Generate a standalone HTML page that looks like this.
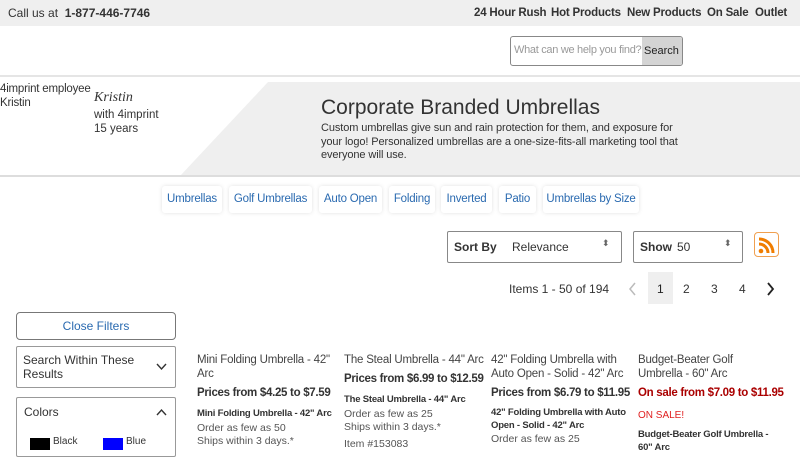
<!DOCTYPE html>
<html><head><meta charset="utf-8"><style>
*{margin:0;padding:0;box-sizing:border-box}
body{width:800px;height:450px;overflow:hidden;background:#fff;font-family:"Liberation Sans",sans-serif;color:#333;position:relative}
.a{position:absolute;white-space:nowrap}
.top{position:absolute;left:0;top:0;width:800px;height:26px;background:#efefef}
.nav{font-size:11.5px;font-weight:bold;color:#333;top:7px;letter-spacing:-.2px}
.chip{position:absolute;top:186px;height:27px;background:#fff;box-shadow:0 0 4px rgba(0,0,0,.12);border-radius:3px;color:#2a6ab0;font-size:11.5px;line-height:27px;text-align:center;white-space:nowrap;letter-spacing:-.2px}
.t{font-size:11.5px;color:#444;line-height:14px;white-space:normal;width:140px;letter-spacing:-.2px}
.p{font-size:11.5px;font-weight:bold;color:#333;letter-spacing:-.3px}
.s{font-size:9.5px;font-weight:bold;color:#333;line-height:13px;white-space:normal;width:142px;letter-spacing:-.2px}
.g{font-size:10.5px;color:#555;line-height:13px}
</style></head><body>
<div class="top"></div>
<div class="a" style="left:8px;top:6px;font-size:12px">Call us at&nbsp; <b>1-877-446-7746</b></div>
<div class="a nav" style="left:474px">24 Hour Rush</div>
<div class="a nav" style="left:551px">Hot Products</div>
<div class="a nav" style="left:627px">New Products</div>
<div class="a nav" style="left:707px">On Sale</div>
<div class="a nav" style="left:755px">Outlet</div>
<div class="a" style="left:510px;top:36px;width:173px;height:30px;border:1px solid #888;border-radius:3px;overflow:hidden">
<div class="a" style="left:3px;top:7px;font-size:11px;color:#999;letter-spacing:-.3px">What can we help you find?</div>
<div class="a" style="left:131px;top:0;width:41px;height:28px;background:#d4d4d4;font-size:11px;color:#222;line-height:28px;padding-left:2px">Search</div></div>
<div class="a" style="left:0;top:75px;width:800px;height:2px;background:#e5e5e5"></div>
<svg class="a" style="left:0;top:82px" width="800" height="94"><polygon points="268,0 800,0 800,94 180,94" fill="#efefef"/></svg>
<div class="a" style="left:0;top:175px;width:800px;height:2px;background:#ddd"></div>
<div class="a" style="left:0;top:82px;font-size:11.5px;line-height:14px;letter-spacing:-.2px">4imprint employee<br>Kristin</div>
<div class="a" style="left:94px;top:90px;font-size:14px;font-style:italic;font-family:'Liberation Serif',serif">Kristin</div>
<div class="a" style="left:94px;top:108px;font-size:11.5px;line-height:14px">with 4imprint<br>15 years</div>
<div class="a" style="left:321px;top:96px;font-size:21px;color:#333">Corporate Branded Umbrellas</div>
<div class="a" style="left:321px;top:122px;font-size:11px;line-height:13.5px;white-space:normal;width:370px;letter-spacing:-.1px">Custom umbrellas give sun and rain protection for them, and exposure for your logo! Personalized umbrellas are a one-size-fits-all marketing tool that everyone will use.</div>
<div class="chip" style="left:162px;width:60px">Umbrellas</div>
<div class="chip" style="left:229px;width:83px">Golf Umbrellas</div>
<div class="chip" style="left:319px;width:63px">Auto Open</div>
<div class="chip" style="left:389px;width:46px">Folding</div>
<div class="chip" style="left:441px;width:51px">Inverted</div>
<div class="chip" style="left:499px;width:37px">Patio</div>
<div class="chip" style="left:543px;width:96px">Umbrellas by Size</div>
<div class="a" style="left:447px;top:231px;width:175px;height:32px;border:1px solid #888;border-radius:2px"></div>
<div class="a" style="left:454px;top:240px;font-size:12px;font-weight:bold">Sort By</div>
<div class="a" style="left:512px;top:240px;font-size:12px">Relevance</div>
<div class="a" style="left:602px;top:238px;font-size:9px;color:#666">⬍</div>
<div class="a" style="left:633px;top:231px;width:110px;height:32px;border:1px solid #888;border-radius:2px"></div>
<div class="a" style="left:640px;top:240px;font-size:12px;font-weight:bold">Show</div>
<div class="a" style="left:677px;top:240px;font-size:12px">50</div>
<div class="a" style="left:724px;top:238px;font-size:9px;color:#666">⬍</div>
<div class="a" style="left:754px;top:232px;width:25px;height:25px;border:1px solid #f0a050;border-radius:4px"></div>
<svg class="a" style="left:758px;top:237px" width="17" height="17"><circle cx="3" cy="14" r="2.3" fill="#f07d00"/><path d="M1 7a9 9 0 0 1 9 9M1 2a14 14 0 0 1 14 14" stroke="#f07d00" stroke-width="3" fill="none"/></svg>
<div class="a" style="left:509px;top:282px;font-size:12px">Items 1 - 50 of 194</div>
<svg class="a" style="left:628px;top:282px" width="10" height="14"><path d="M7 1L2 7l5 6" stroke="#bbb" stroke-width="1.5" fill="none"/></svg>
<div class="a" style="left:648px;top:272px;width:25px;height:32px;background:#efefef"></div>
<div class="a" style="left:657px;top:282px;font-size:12px;color:#222">1</div>
<div class="a" style="left:683px;top:282px;font-size:12px">2</div>
<div class="a" style="left:711px;top:282px;font-size:12px">3</div>
<div class="a" style="left:739px;top:282px;font-size:12px">4</div>
<svg class="a" style="left:766px;top:282px" width="10" height="14"><path d="M2 1l5 6-5 6" stroke="#222" stroke-width="1.8" fill="none"/></svg>
<div class="a" style="left:16px;top:312px;width:160px;height:28px;border:1px solid #777;border-radius:4px;text-align:center;line-height:26px;font-size:12px;color:#2a6ab0">Close Filters</div>
<div class="a" style="left:16px;top:346px;width:160px;height:42px;border:1px solid #999;border-radius:2px"></div>
<div class="a" style="left:23px;top:353px;font-size:12px;line-height:14px">Search Within These<br>Results</div>
<svg class="a" style="left:156px;top:363px" width="11" height="8"><path d="M1 1l4.5 5L10 1" stroke="#333" stroke-width="1.4" fill="none"/></svg>
<div class="a" style="left:16px;top:397px;width:160px;height:60px;border:1px solid #999;border-radius:2px"></div>
<div class="a" style="left:24px;top:405px;font-size:12px">Colors</div>
<svg class="a" style="left:156px;top:408px" width="11" height="8"><path d="M1 7l4.5-5L10 7" stroke="#333" stroke-width="1.4" fill="none"/></svg>
<div class="a" style="left:30px;top:438px;width:20px;height:12px;background:#000"></div>
<div class="a" style="left:53px;top:436px;font-size:10px">Black</div>
<div class="a" style="left:103px;top:438px;width:20px;height:12px;background:#00f"></div>
<div class="a" style="left:126px;top:436px;font-size:10px">Blue</div>
<div class="a t" style="left:197px;top:353px;width:135px">Mini Folding Umbrella - 42" Arc</div>
<div class="a p" style="left:197px;top:387px">Prices from $4.25 to $7.59</div>
<div class="a s" style="left:197px;top:407px">Mini Folding Umbrella - 42" Arc</div>
<div class="a g" style="left:197px;top:422px">Order as few as 50<br>Ships within 3 days.*</div>
<div class="a t" style="left:344px;top:353px;width:145px">The Steal Umbrella - 44" Arc</div>
<div class="a p" style="left:344px;top:373px">Prices from $6.99 to $12.59</div>
<div class="a s" style="left:344px;top:393px">The Steal Umbrella - 44" Arc</div>
<div class="a g" style="left:344px;top:408px">Order as few as 25<br>Ships within 3 days.*</div>
<div class="a g" style="left:344px;top:438px">Item #153083</div>
<div class="a t" style="left:491px;top:353px">42" Folding Umbrella with Auto Open - Solid - 42" Arc</div>
<div class="a p" style="left:491px;top:387px">Prices from $6.79 to $11.95</div>
<div class="a s" style="left:491px;top:406px">42" Folding Umbrella with Auto Open - Solid - 42" Arc</div>
<div class="a g" style="left:491px;top:433px">Order as few as 25</div>
<div class="a t" style="left:638px;top:353px">Budget-Beater Golf Umbrella - 60" Arc</div>
<div class="a p" style="left:638px;top:387px;color:#a00">On sale from $7.09 to $11.95</div>
<div class="a" style="left:638px;top:410px;font-size:10px;color:#e02020">ON SALE!</div>
<div class="a s" style="left:638px;top:428px">Budget-Beater Golf Umbrella - 60" Arc</div>
</body></html>
